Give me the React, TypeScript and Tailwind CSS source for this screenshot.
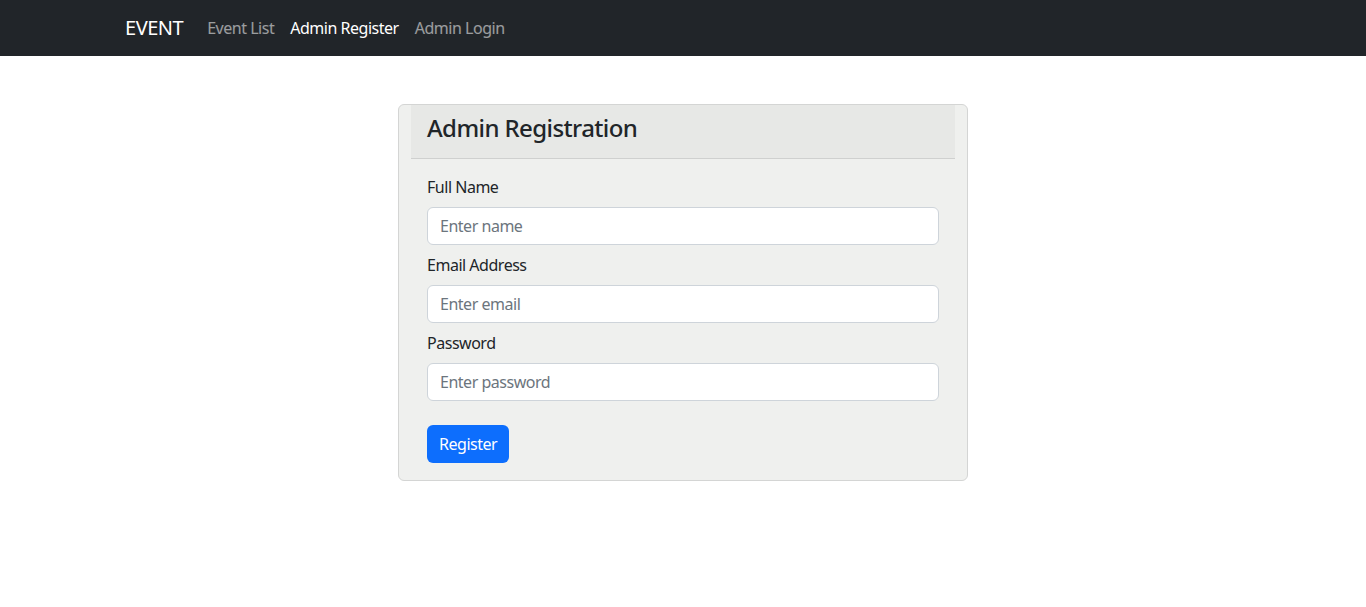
const font = { fontFamily: '"Noto Sans", "Open Sans", Arial, sans-serif' };

function Field({ label, placeholder, type = "text" }: { label: string; placeholder: string; type?: string }) {
  return (
    <div className="mb-2">
      <label className="mb-2 block text-base leading-6 tracking-[-0.03em] text-[#212529]">{label}</label>
      <input
        type={type}
        placeholder={placeholder}
        className="block h-[38px] w-full rounded-[6px] border border-[#ced4da] bg-white px-3 text-base tracking-[-0.03em] text-[#212529] placeholder:text-[#6c757d] outline-none"
      />
    </div>
  );
}

export default function App() {
  return (
    <div className="min-h-screen bg-white" style={font}>
      <nav className="h-14 bg-[#212529]">
        <div className="mx-auto flex h-full max-w-[1140px] items-center px-3 tracking-[-0.03em]">
          <a className="mr-4 text-xl leading-[30px] text-white">EVENT</a>
          <div className="flex">
            <a className="px-2 text-base text-white/55">Event List</a>
            <a className="px-2 text-base text-white">Admin Register</a>
            <a className="px-2 text-base text-white/55">Admin Login</a>
          </div>
        </div>
      </nav>

      <div className="mx-auto mt-12 w-[570px]">
        <div className="rounded-[6px] border border-[#d4d5d4] bg-[#eff0ee]">
          <div className="mx-3 border-b border-[#cfd0cf] bg-[#e7e8e6] px-4 pb-4 pt-2">
            <h3 className="text-2xl font-medium leading-[29px] tracking-[-0.025em] text-[#212529]">Admin Registration</h3>
          </div>
          <form className="px-7 pb-[17px] pt-4" onSubmit={(e) => e.preventDefault()}>
            <Field label="Full Name" placeholder="Enter name" />
            <Field label="Email Address" placeholder="Enter email" type="email" />
            <Field label="Password" placeholder="Enter password" type="password" />
            <button className="mt-4 h-[38px] rounded-[6px] bg-[#0d6efd] px-3 text-base tracking-[-0.03em] text-white">Register</button>
          </form>
        </div>
      </div>
    </div>
  );
}
